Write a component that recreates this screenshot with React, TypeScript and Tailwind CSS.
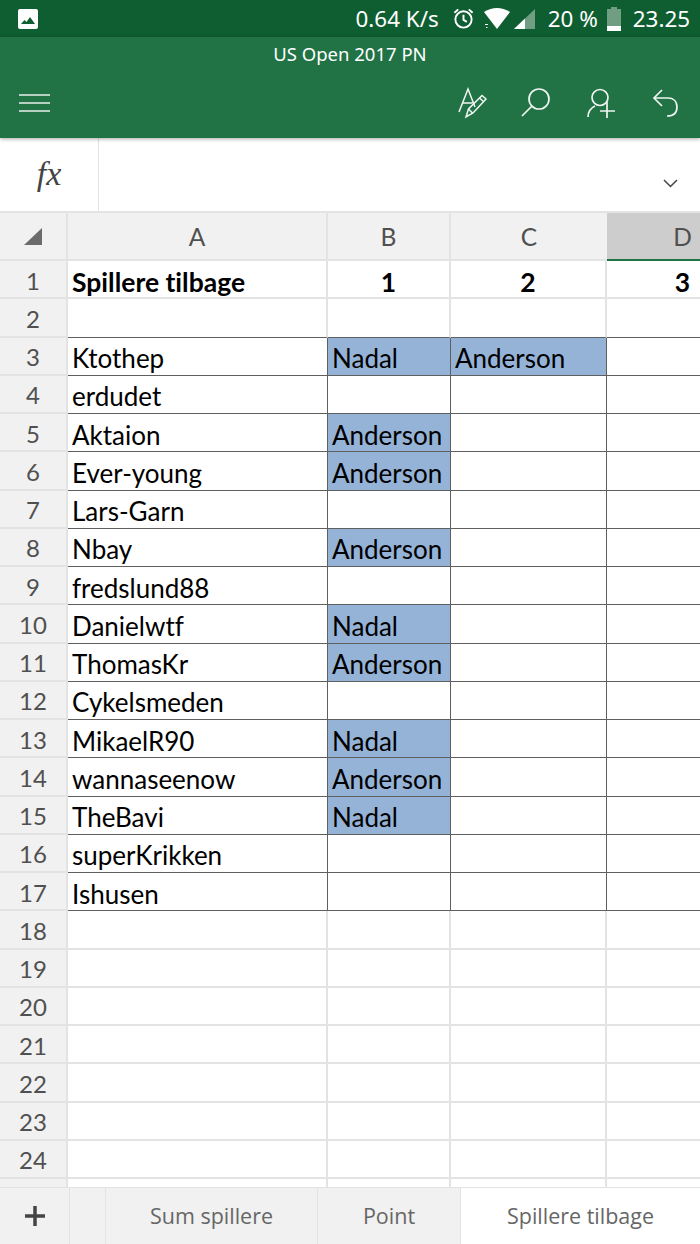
import React from 'react';

const rows: { n: number; a?: string; b?: string; c?: string }[] = [
    { n: 3, a: 'Ktothep', b: 'Nadal', c: 'Anderson' },
    { n: 4, a: 'erdudet' },
    { n: 5, a: 'Aktaion', b: 'Anderson' },
    { n: 6, a: 'Ever-young', b: 'Anderson' },
    { n: 7, a: 'Lars-Garn' },
    { n: 8, a: 'Nbay', b: 'Anderson' },
    { n: 9, a: 'fredslund88' },
    { n: 10, a: 'Danielwtf', b: 'Nadal' },
    { n: 11, a: 'ThomasKr', b: 'Anderson' },
    { n: 12, a: 'Cykelsmeden' },
    { n: 13, a: 'MikaelR90', b: 'Nadal' },
    { n: 14, a: 'wannaseenow', b: 'Anderson' },
    { n: 15, a: 'TheBavi', b: 'Nadal' },
    { n: 16, a: 'superKrikken' },
    { n: 17, a: 'Ishusen' },
];

// row 25 is cut by the tab bar, only its top shows
const emptyRows = [18, 19, 20, 21, 22, 23, 24];

const gridCols = 'grid grid-cols-[68px_260px_123px_156px_1fr]';
const gridRow = 'grid grid-cols-[68px_260px_123px_156px_1fr] grid-rows-[38.25px] h-[38.25px]';
const rowHead = 'flex items-center justify-center bg-[#f1f1f1] border-b-2 border-r-2 border-[#e3e3e3] text-[#505050] text-[24px] leading-none pt-[3px]';
const light = 'border-b-2 border-r-2 border-[#e3e3e3]';
const dark = 'border-b border-r border-[#5f5f5f]';
const boldCell = 'font-bold text-[26.5px] leading-none text-black pt-[7px] [font-variant-ligatures:none]';

const Cell: React.FC<{ value?: string; fill?: boolean }> = ({ value, fill }) => (
    <div className={`${dark} flex items-center pl-[4px] pt-[4px] whitespace-nowrap overflow-hidden text-[26px] leading-none text-black [font-variant-ligatures:none] ${value && fill ? 'bg-[#95b3d7]' : ''}`}>
        {value}
    </div>
);

const StatusBar: React.FC = () => (
    <div className="flex items-center h-[37px] bg-[#0f5e31] text-white text-[22.4px] font-['Noto_Sans',sans-serif] pl-[18px] pr-[10px]">
        <svg width="20" height="20" viewBox="0 0 20 20">
            <rect x="0" y="0" width="20" height="20" rx="2" fill="#fff" />
            <path d="M3 15l3.5-4 2 2 3.5-5 5 7z" fill="#0f5e31" />
        </svg>
        <div className="ml-auto">0.64 K/s</div>
        <svg className="ml-[13px]" width="23" height="23" viewBox="0 0 24 24" fill="none" stroke="#fff" strokeWidth="2">
            <circle cx="12" cy="13" r="8.5" />
            <path d="M12 8v5.5l3.5 2M2.5 6l4-3.5M21.5 6l-4-3.5" />
        </svg>
        <svg className="ml-[8px]" width="52" height="24" viewBox="0 0 52 24">
            <path d="M1 5Q14-3 27 5L14 22z" fill="#fff" />
            <path d="M2 17.500h3M3 20.500h1.500" stroke="#fff" strokeWidth="1" />
            <path d="M31 22L52 2v20z" fill="#fff" fillOpacity="0.4" />
            <path d="M31 22L42 11.500V22z" fill="#fff" />
        </svg>
        <div className="ml-[13px]">20 %</div>
        <svg className="ml-[9px]" width="14" height="24" viewBox="0 0 14 24">
            <path d="M4 0h6v2h4v22H0V2h4z" fill="#fff" fillOpacity="0.4" />
            <rect x="0" y="19" width="14" height="5" fill="#fff" />
        </svg>
        <div className="ml-[12px]">23.25</div>
    </div>
);

const TitleBar: React.FC = () => (
    <div className="h-[101px] bg-[#217346] text-white shadow-[0_1px_4px_rgba(0,0,0,0.35)] relative font-['Noto_Sans',sans-serif]">
        <div className="text-center text-[18.5px] pt-[5px] leading-[24px]">US Open 2017 PN</div>
        <div className="flex items-center pl-[19px] pr-[21px] mt-[21px]">
            <svg width="32" height="20" viewBox="0 0 32 20" stroke="#e8f0ea" strokeWidth="1.6">
                <path d="M0 2h31M0 10h31M0 18h31" />
            </svg>
            <svg className="ml-auto" width="30" height="32" viewBox="0 0 30 32" fill="none" stroke="#f0f5f1" strokeWidth="1.500">
                <path d="M1 25L10 2l7 18M4.500 16h10" />
                <path d="M8 30l2.500-8L24 8.500l4 3.500-13 14z" />
                <path d="M21.500 11l4 3.500M10.500 22l4 4" />
            </svg>
            <svg className="ml-[33px]" width="30" height="30" viewBox="0 0 30 30" fill="none" stroke="#f0f5f1" strokeWidth="1.700">
                <circle cx="18" cy="11" r="10" />
                <path d="M11 18L1 28" />
            </svg>
            <svg className="ml-[36px]" width="29" height="31" viewBox="0 0 29 31" fill="none" stroke="#f0f5f1" strokeWidth="1.700">
                <circle cx="13" cy="9.500" r="8" />
                <path d="M1 29c0-6 3-9 7-11M20 14v16M13 23h15" />
            </svg>
            <svg className="ml-[36px]" width="27" height="29" viewBox="0 0 27 29" fill="none" stroke="#f0f5f1" strokeWidth="1.700">
                <path d="M10 1L2 9l8 8M2 9h14c5 0 9 3 9 9s-4 9-10 9" />
            </svg>
        </div>
    </div>
);

const FormulaBar: React.FC = () => (
    <div className="flex h-[75px] bg-white border-b-2 border-[#e3e3e3]">
        <div className="w-[99px] flex items-center justify-center border-r border-[#e3e3e3] text-[#444] italic text-[34px] pb-[2px] font-['Liberation_Serif',serif]">
            fx
        </div>
        <div className="flex-1 flex items-end justify-end pr-[22px] pb-[23px]">
            <svg width="15" height="9" viewBox="0 0 15 9" fill="none" stroke="#444" strokeWidth="1.500">
                <path d="M1 1l6.500 6.500L14 1" />
            </svg>
        </div>
    </div>
);

const ColHeader: React.FC = () => (
    <div className={`${gridCols} h-[48px] text-[24.5px] text-[#505050]`}>
        <div className="bg-[#f1f1f1] border-r-2 border-b-2 border-[#e3e3e3] flex items-center justify-center">
            <svg width="19" height="19" viewBox="0 0 19 19">
                <path d="M18 1v17H0z" fill="#6b6b6b" />
            </svg>
        </div>
        <div className="bg-[#f1f1f1] border-r-2 border-b-2 border-[#e3e3e3] flex items-center justify-center pt-[3px]">A</div>
        <div className="bg-[#f1f1f1] border-r-2 border-b-2 border-[#e3e3e3] flex items-center justify-center pt-[3px]">B</div>
        <div className="bg-[#f1f1f1] border-b-2 border-[#e3e3e3] flex items-center justify-center pt-[3px]">C</div>
        <div className="bg-[#cdcdcd] border-b-2 border-[#217346] flex items-center justify-end pr-[8px] pt-[3px]">D</div>
    </div>
);

const SheetTabs: React.FC = () => (
    <div className="flex h-[57px] bg-[#f1f1f1] border-t border-[#e3e3e3] text-[21.5px] text-[#666] font-['Open_Sans',sans-serif]">
        <div className="w-[70px] flex items-center justify-center border-r border-[#e3e3e3]">
            <svg width="20" height="20" viewBox="0 0 20 20" stroke="#444" strokeWidth="3.500">
                <path d="M10 0v20M0 10h20" />
            </svg>
        </div>
        <div className="w-[36px] border-r border-[#e3e3e3]" />
        <div className="w-[212px] flex items-center justify-center border-r border-[#e3e3e3]">Sum spillere</div>
        <div className="w-[143px] flex items-center justify-center border-r border-[#e3e3e3]">Point</div>
        <div className="flex-1 flex items-center justify-center bg-white">Spillere tilbage</div>
    </div>
);

const App: React.FC = () => {
    return (
        <div className="w-[700px] h-[1244px] flex flex-col overflow-hidden bg-white font-['Lato',sans-serif]">
            <StatusBar />
            <TitleBar />
            <FormulaBar />
            <ColHeader />
            <div className="flex-1 overflow-hidden">
                <div className={gridRow}>
                    <div className={rowHead}>1</div>
                    <div className={`${light} ${boldCell} flex items-center pl-[4px]`}>Spillere tilbage</div>
                    <div className={`${light} ${boldCell} flex items-center justify-center`}>1</div>
                    <div className={`${light} ${boldCell} flex items-center justify-center`}>2</div>
                    <div className={`border-b-2 border-[#e3e3e3] ${boldCell} flex items-center justify-end pr-[10px]`}>3</div>
                </div>
                <div className={gridRow}>
                    <div className={rowHead}>2</div>
                    <div className="border-b border-r-2 border-b-[#5f5f5f] border-r-[#e3e3e3]" />
                    <div className="border-b border-r-2 border-b-[#5f5f5f] border-r-[#e3e3e3]" />
                    <div className="border-b border-r-2 border-b-[#5f5f5f] border-r-[#e3e3e3]" />
                    <div className="border-b border-b-[#5f5f5f]" />
                </div>
                {rows.map((row) => (
                    <div key={row.n} className={gridRow}>
                        <div className={rowHead}>{row.n}</div>
                        <Cell value={row.a} />
                        <Cell value={row.b} fill />
                        <Cell value={row.c} fill />
                        <div className="border-b border-[#5f5f5f]" />
                    </div>
                ))}
                {emptyRows.map((n) => (
                    <div key={n} className={gridRow}>
                        <div className={rowHead}>{n}</div>
                        <div className={light} />
                        <div className={light} />
                        <div className={light} />
                        <div className="border-b-2 border-[#e3e3e3]" />
                    </div>
                ))}
                <div className={gridRow}>
                    <div className={rowHead} />
                    <div className={light} />
                    <div className={light} />
                    <div className={light} />
                    <div className="border-b-2 border-[#e3e3e3]" />
                </div>
            </div>
            <SheetTabs />
        </div>
    );
};

export default App;
